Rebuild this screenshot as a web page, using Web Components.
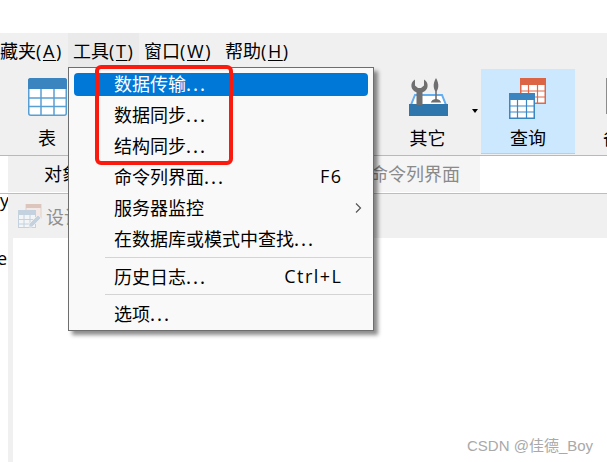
<!DOCTYPE html>
<html lang="zh">
<head>
<meta charset="utf-8">
<style>
  html, body { margin: 0; padding: 0; background: #fff; overflow: hidden; }
  body {
    width: 607px;
    height: 462px;
    font: 18px "Noto Sans CJK SC", "Noto Sans", sans-serif;
    color: #000;
  }
</style>
</head>
<body>
<nc-window>
  <nc-menubar></nc-menubar>
  <nc-toolbar></nc-toolbar>
  <nc-tabs></nc-tabs>
  <nc-subbar></nc-subbar>
  <nc-content></nc-content>
</nc-window>

<script>
// ===== icons =====
const tableIcon = (head, line, w, h) => `
  <svg width="${w}" height="${h}" viewBox="0 0 39 38" style="display:block">
    <rect x=".75" y=".75" width="37.5" height="36.5" rx="2" fill="#fff" stroke="${line}" stroke-width="1.5"/>
    <path d="M0 11V2.500A2.500 2.500 0 0 1 2.500 0h34A2.500 2.500 0 0 1 39 2.500V11z" fill="${head}"/>
    <path d="M13 11v26M26 11v26M1 20h37M1 28.500h37" stroke="${line}" stroke-width="1.500" fill="none"/>
  </svg>`;

const toolsIcon = `
  <svg width="39" height="38" viewBox="0 0 39 38" style="display:block">
    <path d="M6 17h27l4 10H2z" fill="#fff" stroke="#62aef0" stroke-width="2"/>
    <path d="M0 26h39v12H0z" fill="#2f76ad"/>
    <path d="M6 1.500C3 3 2 6 2.500 9c.5 2.500 2.500 4.500 5 5.200V27h6V14.200c2.500-.7 4.500-2.700 5-5.200.5-3-.5-6-3.500-7.500V7.500l-3 2.500h-3l-3-2.500z" fill="#6f6f6f"/>
    <path d="M27 0c-1.800 3-2.500 6-2.300 8.500.2 2 1 3.500 1.500 5V21c-1.800.3-3.800 1.500-4.400 3.500h10.400c-.6-2-2.600-3.200-4.400-3.500v-7.500c.5-1.500 1.300-3 1.500-5C29.500 6 28.800 3 27 0z" fill="#6f6f6f"/>
  </svg>`;

const queryIcon = `
  <svg width="38" height="41" viewBox="0 0 38 41" style="display:block">
    <g transform="translate(11 0)">
      <rect x=".75" y=".75" width="24.500" height="24.500" fill="#fff" stroke="#e0684a" stroke-width="1.500"/>
      <path d="M0 7V1.500A1.500 1.500 0 0 1 1.500 0h23A1.500 1.500 0 0 1 26 1.500V7z" fill="#db6545"/>
      <path d="M8.500 7v18M17.500 7v18M1 13h24M1 19h24" stroke="#e0684a" stroke-width="1.200" fill="none"/>
    </g>
    <g transform="translate(0 15)">
      <rect x=".75" y=".75" width="24.500" height="24.500" fill="#fff" stroke="#3a87c4" stroke-width="1.500"/>
      <path d="M0 7V1.500A1.500 1.500 0 0 1 1.500 0h23A1.500 1.500 0 0 1 26 1.500V7z" fill="#3a84bf"/>
      <path d="M8.500 7v18M17.500 7v18M1 13h24M1 19h24" stroke="#3a87c4" stroke-width="1.200" fill="none"/>
    </g>
  </svg>`;

const designIcon = `
  <svg width="24" height="24" viewBox="0 0 24 24" style="display:block">
    <rect x="8" y="0" width="15" height="14" fill="#f4e9e6" stroke="#e0cfc9"/>
    <path d="M8 0h15v4H8z" fill="#dcc5bd"/>
    <rect x=".5" y="6.500" width="17" height="17" fill="#f3f5f7" stroke="#c3d2de"/>
    <path d="M0 6h18v5H0z" fill="#c3d2de"/>
    <path d="M6 11v13M12 11v13M0 15.500h18M0 20h18" stroke="#c3d2de" fill="none"/>
    <path d="M11 20l9-9 3 3-9 9h-3z" fill="#c3d2de" stroke="#f0f0f0" stroke-width=".8"/>
  </svg>`;

// ===== window shell =====
class NcWindow extends HTMLElement {
  constructor() {
    super();
    this.attachShadow({ mode: 'open' });
    this.shadowRoot.innerHTML = `
      <style>
        :host { display: flex; flex-direction: column; width: 607px; height: 462px; padding-top: 33px; box-sizing: border-box; position: relative; overflow: hidden; }
        .watermark { position: absolute; left: 467px; top: 434px; font: 15px "Liberation Sans", "Noto Sans CJK SC", sans-serif; color: #a9a9a9; white-space: nowrap; }
      </style>
      <slot></slot>
      <nc-dropdown></nc-dropdown>
      <span class="watermark">CSDN @佳德_Boy</span>
    `;
  }
}

// ===== menu bar =====
class NcMenubar extends HTMLElement {
  constructor() {
    super();
    this.attachShadow({ mode: 'open' });
    const items = [
      { label: '藏夹', key: 'A', width: 68, pad: 0 },
      { label: '工具', key: 'T', width: 71, pad: 5, active: true },
      { label: '窗口', key: 'W', width: 80, pad: 5 },
      { label: '帮助', key: 'H', width: 80, pad: 6 }
    ];
    this.shadowRoot.innerHTML = `
      <style>
        :host { display: flex; height: 34px; background: #f0f0f0; flex: none; }
        .item { box-sizing: border-box; height: 34px; white-space: nowrap; font: 18px/35px "Noto Sans CJK SC", sans-serif; }
        .item.active { background: #eaeaea; }
        .key { font-family: "Open Sans", sans-serif; letter-spacing: 1.6px; }
        u { text-decoration-thickness: 1px; text-underline-offset: 2px; }
      </style>
      ${items.map(item => `
        <div class="item ${item.active ? 'active' : ''}" style="width:${item.width}px;padding-left:${item.pad}px">${item.label}<span class="key">(<u>${item.key}</u>)</span></div>
      `).join('')}
    `;
  }
}

// ===== tool button =====
class NcToolButton extends HTMLElement {
  constructor() {
    super();
    this.attachShadow({ mode: 'open' });
    this.shadowRoot.innerHTML = `
      <style>
        :host { display: flex; flex-direction: column; align-items: center; box-sizing: border-box; width: 94px; height: 85px; padding-top: 9px; flex: none; }
        :host([selected]) { background: #cce8ff; border-bottom: 1px solid #a8d4f5; }
        .icon { height: 41px; display: flex; }
        .label { line-height: 24px; margin-top: 6px; font-size: 18px; white-space: nowrap; }
      </style>
      <div class="icon"><slot name="icon"></slot></div>
      <div class="label"><slot></slot></div>
    `;
  }
}

// ===== toolbar =====
class NcToolbar extends HTMLElement {
  constructor() {
    super();
    this.attachShadow({ mode: 'open' });
    this.shadowRoot.innerHTML = `
      <style>
        :host { display: flex; box-sizing: border-box; height: 89px; padding-top: 2px; background: #f0f0f0; border-bottom: 1px solid #b9b9b9; flex: none; overflow: hidden; }
        .gap-a { width: 312px; flex: none; }
        .caret { width: 0; height: 0; margin: 40px 3px 0 -2px; border: 3px solid transparent; border-top: 4px solid #000; border-bottom: 0; flex: none; }
        .last { margin-left: 28px; }
        span[slot] { display: block; }
      </style>
      <nc-tool-button><span slot="icon">${tableIcon('#3a84bf', '#5a9fd4', 39, 38)}</span>表</nc-tool-button>
      <div class="gap-a"></div>
      <nc-tool-button style="width:45px"><span slot="icon">${toolsIcon}</span><span style="margin-left:-2px">其它</span></nc-tool-button>
      <div style="width:23px;flex:none"></div>
      <div class="caret"></div>
      <nc-tool-button selected><span slot="icon">${queryIcon}</span>查询</nc-tool-button>
      <nc-tool-button class="last" style="width:60px;align-items:flex-start"><span slot="icon"><svg width="6" height="36" style="display:block;margin-left:3px"><rect width="3" height="36" fill="#8c8c8c"/></svg></span>备</nc-tool-button>
    `;
  }
}

// ===== tab row =====
class NcTabs extends HTMLElement {
  constructor() {
    super();
    this.attachShadow({ mode: 'open' });
    this.shadowRoot.innerHTML = `
      <style>
        :host { display: flex; height: 37px; background: #fff; border-bottom: 1px solid #bdbdbd; flex: none; box-sizing: content-box; }
        .tab { box-sizing: border-box; height: 36px; line-height: 35px; font-size: 18px; white-space: nowrap; }
        .side { width: 8px; flex: none; }
        .first { width: 112px; padding-left: 36px; background: #f0f0f0; flex: none; }
        .second { width: 360px; text-align: right; background: #f5f5f5; color: #8a8a8a; flex: none; }
      </style>
      <div class="side"></div>
      <div class="tab first">对象</div>
      <div class="tab second">命令列界面<span style="display:inline-block;width:20px"></span></div>
    `;
  }
}

// ===== designer row =====
class NcSubbar extends HTMLElement {
  constructor() {
    super();
    this.attachShadow({ mode: 'open' });
    this.shadowRoot.innerHTML = `
      <style>
        :host { display: flex; height: 44px; flex: none; background: #f0f0f0; }
        .side { width: 8px; background: #fff; position: relative; flex: none; overflow: hidden; }
        .side span { position: absolute; right: -1px; top: -6px; font: 18px "Open Sans", sans-serif; }
        .btn { display: flex; align-items: center; gap: 4px; padding-left: 10px; color: #8f8f8f; font-size: 18px; white-space: nowrap; }
      </style>
      <div class="side"><span>y</span></div>
      <div class="btn">${designIcon}<span>设计</span></div>
    `;
  }
}

// ===== content area =====
class NcContent extends HTMLElement {
  constructor() {
    super();
    this.attachShadow({ mode: 'open' });
    this.shadowRoot.innerHTML = `
      <style>
        :host { display: flex; flex: 1; min-height: 0; background: #fff; }
        .side { width: 8px; background: #fff; position: relative; flex: none; overflow: hidden; }
        .side span { position: absolute; right: 1px; top: 8px; font: 18px "Open Sans", sans-serif; }
        .strip { width: 5px; background: #f0f0f0; flex: none; }
      </style>
      <div class="side"><span>e</span></div>
      <div class="strip"></div>
    `;
  }
}

// ===== dropdown =====
class NcMenuItem extends HTMLElement {
  constructor() {
    super();
    this.attachShadow({ mode: 'open' });
    this.shadowRoot.innerHTML = `
      <style>
        :host { display: block; height: 31px; box-sizing: border-box; padding: 4px 5px; }
        .row { display: flex; align-items: center; justify-content: space-between; height: 23px; padding: 0 26px 0 40px; border-radius: 4px; font-size: 18px; line-height: 21px; white-space: nowrap; }
        :host([active]) .row { background: #0078d7; color: #fff; }
        .text { margin-top: -2px; }
        .shortcut { font: 18px/21px "Open Sans", "Noto Sans", sans-serif; letter-spacing: 1.5px; margin-right: -.5px; margin-top: -2px; }
        svg { margin-right: -20px; }
      </style>
      <div class="row"><span class="text"><slot></slot></span><span class="shortcut" id="tail"></span></div>
    `;
  }

  connectedCallback() {
    const tail = this.shadowRoot.getElementById('tail');
    tail.textContent = this.getAttribute('shortcut') || '';
    if (this.hasAttribute('submenu')) {
      tail.innerHTML = '<svg width="7" height="10" viewBox="0 0 7 10" style="display:block;transform:translateX(12px)"><path d="M1 .5L5.500 5 1 9.500" fill="none" stroke="#555" stroke-width="1.200"/></svg>';
    }
  }
}

class NcDropdown extends HTMLElement {
  constructor() {
    super();
    this.attachShadow({ mode: 'open' });
    this.shadowRoot.innerHTML = `
      <style>
        :host { position: absolute; left: 68px; top: 67px; width: 306px; height: 264px; box-sizing: border-box; padding-top: 1px; background: #f9f9f9; border: 1px solid #6e6e6e; box-shadow: 4px 4px 4px rgba(0,0,0,.45); }
        .sep { height: 1px; background: #d4d4d4; margin-left: 36px; margin-right: 1px; }
        .sep.a { margin-top: 2px; margin-bottom: 4px; }
        .sep.b { margin-top: 1px; margin-bottom: 4px; }
        .mark { position: absolute; left: 26px; top: -3px; width: 138px; height: 100px; box-sizing: border-box; border: 4px solid #fa1a0e; border-radius: 6px; }
        i { font-style: normal; letter-spacing: 2px; }
      </style>
      <nc-menu-item active>数据传输<i>...</i></nc-menu-item>
      <nc-menu-item>数据同步<i>...</i></nc-menu-item>
      <nc-menu-item>结构同步<i>...</i></nc-menu-item>
      <nc-menu-item shortcut="F6">命令列界面<i>...</i></nc-menu-item>
      <nc-menu-item submenu>服务器监控</nc-menu-item>
      <nc-menu-item>在数据库或模式中查找<i>...</i></nc-menu-item>
      <div class="sep a"></div>
      <nc-menu-item shortcut="Ctrl+L">历史日志<i>...</i></nc-menu-item>
      <div class="sep b"></div>
      <nc-menu-item>选项<i>...</i></nc-menu-item>
      <div class="mark"></div>
    `;
  }
}

// Registrar os componentes
customElements.define('nc-menu-item', NcMenuItem);
customElements.define('nc-dropdown', NcDropdown);
customElements.define('nc-tool-button', NcToolButton);
customElements.define('nc-toolbar', NcToolbar);
customElements.define('nc-menubar', NcMenubar);
customElements.define('nc-tabs', NcTabs);
customElements.define('nc-subbar', NcSubbar);
customElements.define('nc-content', NcContent);
customElements.define('nc-window', NcWindow);
</script>
</body>
</html>
